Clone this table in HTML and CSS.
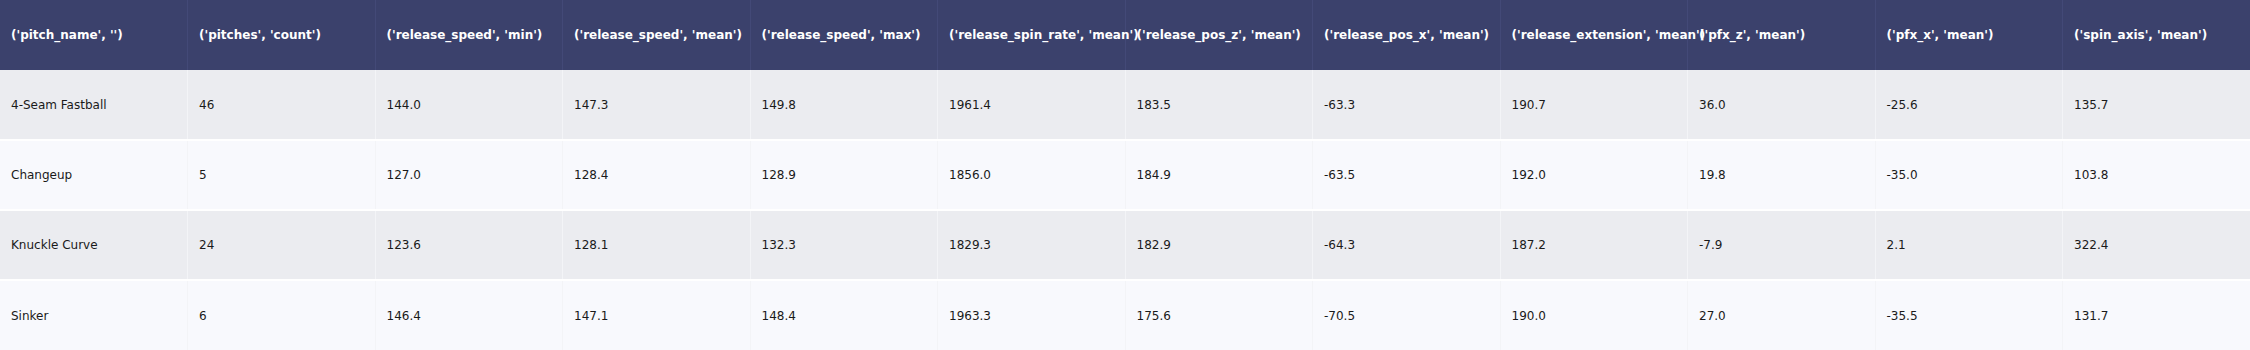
FILE: index.html
```html
<!DOCTYPE html>
<html lang="en">
<head>
  <meta charset="UTF-8" />
  <title>Pitch summary</title>
  <link rel="stylesheet" href="styles.css">
</head>
<body>
  <table class="stats-table">
    <thead>
      <tr>
        <th>('pitch_name', '')</th>
        <th>('pitches', 'count')</th>
        <th>('release_speed', 'min')</th>
        <th>('release_speed', 'mean')</th>
        <th>('release_speed', 'max')</th>
        <th>('release_spin_rate', 'mean')</th>
        <th>('release_pos_z', 'mean')</th>
        <th>('release_pos_x', 'mean')</th>
        <th>('release_extension', 'mean')</th>
        <th>('pfx_z', 'mean')</th>
        <th>('pfx_x', 'mean')</th>
        <th>('spin_axis', 'mean')</th>
      </tr>
    </thead>
    <tbody>
      <tr>
        <td>4-Seam Fastball</td><td>46</td><td>144.0</td><td>147.3</td><td>149.8</td><td>1961.4</td>
        <td>183.5</td><td>-63.3</td><td>190.7</td><td>36.0</td><td>-25.6</td><td>135.7</td>
      </tr>
      <tr>
        <td>Changeup</td><td>5</td><td>127.0</td><td>128.4</td><td>128.9</td><td>1856.0</td>
        <td>184.9</td><td>-63.5</td><td>192.0</td><td>19.8</td><td>-35.0</td><td>103.8</td>
      </tr>
      <tr>
        <td>Knuckle Curve</td><td>24</td><td>123.6</td><td>128.1</td><td>132.3</td><td>1829.3</td>
        <td>182.9</td><td>-64.3</td><td>187.2</td><td>-7.9</td><td>2.1</td><td>322.4</td>
      </tr>
      <tr>
        <td>Sinker</td><td>6</td><td>146.4</td><td>147.1</td><td>148.4</td><td>1963.3</td>
        <td>175.6</td><td>-70.5</td><td>190.0</td><td>27.0</td><td>-35.5</td><td>131.7</td>
      </tr>
    </tbody>
  </table>
</body>
</html>
```

FILE: styles.css
```css
:root {
  --header-bg: #3b416c;
  --header-line: #434977;
  --row-odd: #ebecf0;
  --row-even: #f8f9fd;
  --cell-line: #f3f4f7;
  --text-color: #1a1a1a;
}
* { margin: 0; padding: 0; box-sizing: border-box; }
body {
  font-family: 'DejaVu Sans', Verdana, sans-serif;
  background: var(--row-even);
  width: 2250px;
  height: 350px;
  overflow: hidden;
}
.stats-table {
  width: 2250px;
  table-layout: fixed;
  border-collapse: collapse;
  font-size: 12px;
}
.stats-table th,
.stats-table td {
  height: 70px;
  padding: 0 0 0 11px;
  text-align: left;
  vertical-align: middle;
  white-space: nowrap;
  overflow: visible;
}
.stats-table th {
  background: var(--header-bg);
  color: #fff;
  font-weight: bold;
  border-left: 1px solid var(--header-line);
}
.stats-table td {
  color: var(--text-color);
  border-left: 1px solid var(--cell-line);
  border-top: 2px solid #fff;
}
.stats-table th:first-child,
.stats-table td:first-child { border-left: none; }
.stats-table tbody tr:nth-child(odd) td { background: var(--row-odd); }
.stats-table tbody tr:nth-child(even) td { background: var(--row-even); }
.stats-table tbody tr:first-child td { border-top: none; }
```
